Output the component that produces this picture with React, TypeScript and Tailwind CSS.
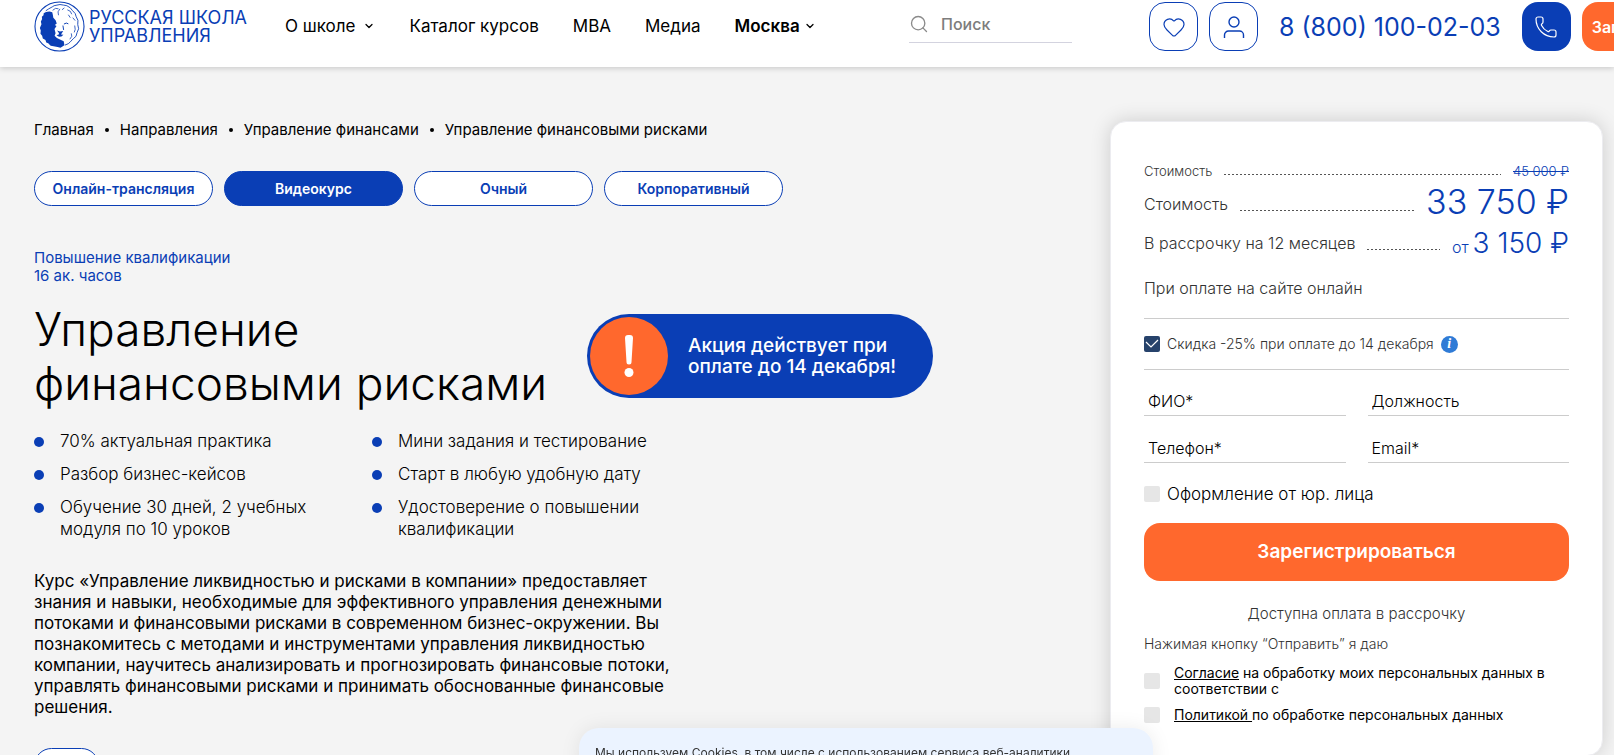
import type { ReactNode } from "react";
import { ChevronDown, Heart, Phone, Search } from "lucide-react";

const crumbs = ["Главная", "Направления", "Управление финансами", "Управление финансовыми рисками"];

const formats = ["Онлайн-трансляция", "Видеокурс", "Очный", "Корпоративный"];

const features = [
  "70% актуальная практика",
  "Мини задания и тестирование",
  "Разбор бизнес-кейсов",
  "Старт в любую удобную дату",
  "Обучение 30 дней, 2 учебных модуля по 10 уроков",
  "Удостоверение о повышении квалификации",
];

const fields = [
  { id: "fio", type: "text", label: "ФИО*" },
  { id: "position", type: "text", label: "Должность" },
  { id: "phone", type: "tel", label: "Телефон*" },
  { id: "email", type: "email", label: "Email*" },
];

function LionLogo() {
  return (
    <svg viewBox="0 0 52 52" className="size-[51px] shrink-0" fill="none" stroke="#0a3eb5">
      <circle cx="26" cy="26" r="25" strokeWidth="1.1" />
      {/* dark side of the mane */}
      <path
        fill="#0a3eb5"
        stroke="none"
        d="M11.700 11.400L13.700 11L15.900 10.700L18.600 11.400L19.200 14L19.700 17L22 19.700L23.200 23L21.200 24.500L23 25.600L20.900 28.600L22 32.800L21 35.500L23.400 37.600L27 39.500L30.300 41L31 45.200L29 46.500L27 47.600L24 47L20 46.200L17 45.500L14.500 43L12.500 42.200L11.700 39.700L9 38.200L8.300 35.500L6.600 33.500L6.900 30L6 27.500L7.600 23.800L7 21L8.300 18.300L8 16L9.700 14.500L9.900 12.500z"
      />
      {/* light side outline */}
      <path
        strokeWidth="0.9"
        d="M12 10L15 8L18.600 6L20.500 4.800L23.400 4.200L26.500 3.600L30.300 4.200L33.500 4.800L37 7L39 9.500L42 12.800L43 16L44.800 19.700L44.600 24L45.500 28.300L44 32L42.800 36L40 38.500L37 41.700L35 43.500L31.500 45"
      />
      <path
        strokeWidth="0.8"
        d="M19 9.500L22 7.500L25 8M26.500 8L24.500 11L25 14.500M31 7L28.500 9M34 9L37 10.500L38.500 13.500M39.500 17L42 20M41.500 25L42 29L41 32M38 33L38.500 36L36.500 39M35 14L37 17"
      />
      <path strokeWidth="1" d="M30.500 23.500L33 22.500L35 23.300M29.500 25L30.200 29.500" />
      <path fill="#0a3eb5" stroke="none" d="M23.500 30L26.500 31.200L29.800 30.500L28.500 32.500L27.500 34.200L30 34.500L28 36.200L25.500 36.400L23 35L25.600 34L25.200 32.400z" />
    </svg>
  );
}

function Checkbox({ id, checked, children }: { id: string; checked?: boolean; children: ReactNode }) {
  return (
    <>
      <span className="relative flex size-4 shrink-0">
        <input
          id={id}
          type="checkbox"
          defaultChecked={checked}
          className="peer size-4 appearance-none rounded-xs bg-[#e6e6e6] checked:bg-[#26426b]"
        />
        <svg
          viewBox="0 0 16 16"
          className="pointer-events-none absolute inset-0 hidden peer-checked:block"
          fill="none"
          stroke="#fff"
          strokeWidth="1.2"
        >
          <path d="M2 6l5 5 7-7" />
        </svg>
      </span>
      <label htmlFor={id}>{children}</label>
    </>
  );
}

function Leader({ className }: { className: string }) {
  return (
    <span
      className={`h-px flex-1 bg-[repeating-linear-gradient(90deg,#555_0_2px,transparent_2px_4px)] ${className}`}
    />
  );
}

function Header() {
  return (
    <header className="relative z-10 flex items-start overflow-hidden bg-white pt-px pb-[15px] pl-[34px] whitespace-nowrap shadow-[0_1px_6px_rgba(0,0,0,0.2)]">
      <a href="#" className="flex w-[251px] shrink-0 items-center gap-1 text-lg/[18px] text-[#0a3eb5]">
        <LionLogo />
        <span>
          РУССКАЯ ШКОЛА
          <br />
          УПРАВЛЕНИЯ
        </span>
      </a>
      <nav className="flex h-[50px] w-[624px] shrink-0 items-center gap-[34px] text-[17px]/6">
        <a href="#" className="flex items-center gap-2">
          О школе <ChevronDown className="size-3" strokeWidth={2.5} />
        </a>
        <a href="#">Каталог курсов</a>
        <a href="#">MBA</a>
        <a href="#">Медиа</a>
        <button type="button" className="flex items-center gap-1 font-semibold">
          Москва <ChevronDown className="size-3" strokeWidth={2.5} />
        </button>
      </nav>
      <div className="mt-1 flex h-[38px] w-[163px] shrink-0 items-center gap-3 border-b border-[#d3d3df]">
        <Search className="size-5 shrink-0 text-[#8a8a8a]" strokeWidth={1.6} />
        <input
          type="search"
          aria-label="Поиск"
          placeholder="Поиск"
          className="min-w-0 flex-1 text-base font-medium outline-none placeholder:text-[#7d7d7d]"
        />
      </div>
      <div className="ml-[77px] flex shrink-0 items-center pt-px text-[#0a3eb5]">
        <a href="#" className="mr-[11px] flex size-[49px] items-center justify-center rounded-2xl border border-[#0a3eb5]">
          <Heart className="size-6" strokeWidth={1.2} />
        </a>
        <a href="#" className="flex size-[49px] items-center justify-center rounded-2xl border border-[#0a3eb5]">
          <svg viewBox="0 0 24 24" className="size-6" fill="none" stroke="currentColor" strokeWidth="1.4">
            <circle cx="12" cy="7" r="5" />
            <path d="M2.500 23v-3a4 4 0 0 1 4-4h11a4 4 0 0 1 4 4v3" />
          </svg>
        </a>
        <a href="tel:88001000203" className="mx-[21px] text-[25px]/8">
          8 (800) 100-02-03
        </a>
        <a href="#" className="mr-[11px] flex size-[49px] items-center justify-center rounded-2xl bg-[#0a3eb5] text-white">
          <Phone className="size-6" strokeWidth={1.2} />
        </a>
        <button type="button" className="h-[49px] rounded-2xl bg-[#ff682d] px-[10px] text-base font-semibold text-white">
          Записаться
        </button>
      </div>
    </header>
  );
}

function Course() {
  return (
    <section className="min-w-0 flex-1 pt-[53px] pl-[34px]">
      <nav className="flex items-center gap-[11px] text-[15px]/5">
        {crumbs.map((crumb, i) => (
          <span key={crumb} className="flex items-center gap-[11px]">
            {i > 0 && <span className="size-1 rounded-full bg-black" />}
            <a href="#">{crumb}</a>
          </span>
        ))}
      </nav>

      <div className="mt-[31px] flex gap-[11px]">
        {formats.map((format) => (
          <button
            key={format}
            type="button"
            className={`h-[35px] w-[179px] rounded-full border border-[#0a3eb5] text-sm font-semibold ${
              format === "Видеокурс" ? "bg-[#0a3eb5] text-white" : "bg-white text-[#0a3eb5]"
            }`}
          >
            {format}
          </button>
        ))}
      </div>

      <p className="mt-[43px] text-[15px]/[18px] text-[#0a3eb5]">
        Повышение квалификации
        <br />
        16 ак. часов
      </p>

      <div className="mt-[17px] flex items-center">
        <h1 className="w-[553px] text-[46px]/[54px] font-light">Управление финансовыми рисками</h1>
        <div className="flex h-[84px] w-[346px] items-center gap-5 rounded-full bg-[#0a3eb5] pl-[3px] text-white">
          <span className="flex size-[78px] items-center justify-center rounded-full bg-[#ff682d]">
            <svg viewBox="0 0 10 42" className="h-[42px] w-[10px]" fill="#fff">
              <path d="M1 3a3 3 0 0 1 3-3h2a3 3 0 0 1 3 3l-1.500 24a2 2 0 0 1-5 0z" />
              <circle cx="5" cy="37.500" r="4.500" />
            </svg>
          </span>
          <p className="text-[19px]/[21px] font-medium">
            Акция действует при
            <br />
            оплате до 14 декабря!
          </p>
        </div>
      </div>

      <ul className="mt-5 grid w-[676px] grid-cols-2 gap-y-[11px] text-[17px]/[22px] font-light">
        {features.map((feature) => (
          <li key={feature} className="flex gap-4">
            <span className="mt-[7px] size-[10px] shrink-0 rounded-full bg-[#0a3eb5]" />
            <span className="max-w-[265px]">{feature}</span>
          </li>
        ))}
      </ul>

      <p className="mt-[31px] max-w-[660px] text-[17px]/[21px]">
        Курс «Управление ликвидностью и рисками в компании» предоставляет знания и навыки, необходимые для эффективного
        управления денежными потоками и финансовыми рисками в современном бизнес-окружении. Вы познакомитесь с методами
        и инструментами управления ликвидностью компании, научитесь анализировать и прогнозировать финансовые потоки,
        управлять финансовыми рисками и принимать обоснованные финансовые решения.
      </p>

      <div className="mt-[30px] h-[35px] w-[65px] rounded-full border border-[#0a3eb5] bg-white" />
    </section>
  );
}

function OrderForm() {
  return (
    <form className="mt-[54px] mr-[11px] w-[493px] shrink-0 self-start rounded-2xl border border-[#ececf0] bg-white px-[33px] pt-10 pb-8 text-[#333] shadow-[0_0_20px_rgba(0,0,0,0.16)]">
      <div className="flex items-end gap-3 text-[13px]/[18px] font-light">
        <span>Стоимость</span>
        <Leader className="mb-[5px]" />
        <s className="text-[#0a3eb5]">45 000 ₽</s>
      </div>
      <div className="mt-1 flex items-end gap-3 text-base/8 font-light">
        <span>Стоимость</span>
        <Leader className="mb-[9px]" />
        <span className="text-[34px]/9 text-[#0a3eb5]">33 750 ₽</span>
      </div>
      <div className="mt-[7px] flex items-end gap-3 text-base/8 font-light">
        <span>В рассрочку на 12 месяцев</span>
        <Leader className="mb-[9px]" />
        <span className="flex items-baseline gap-1 leading-5 text-[#0a3eb5]">
          от <span className="text-[28px]/8">3 150 ₽</span>
        </span>
      </div>
      <p className="mt-[17px] text-base/6 font-light">При оплате на сайте онлайн</p>

      <div className="mt-[18px] flex h-[52px] items-center gap-[7px] border-y border-[#ccc] text-sm font-light">
        <Checkbox id="discount" checked>
          Скидка -25% при оплате до 14 декабря
        </Checkbox>
        <span className="flex size-[17px] items-center justify-center rounded-full bg-[#2f7bd6] font-['Liberation_Serif',serif] text-sm/4 font-bold text-white italic">
          i
        </span>
      </div>

      <div className="mt-4 grid grid-cols-2 gap-x-[22px] gap-y-[17px]">
        {fields.map((field) => (
          <input
            key={field.id}
            id={field.id}
            type={field.type}
            aria-label={field.label}
            placeholder={field.label}
            className="h-[30px] w-full border-b border-[#ccc] px-1 text-base font-light outline-none placeholder:text-black"
          />
        ))}
      </div>

      <div className="mt-[19px] flex items-center gap-[7px] text-[17px]/6 font-light text-black">
        <Checkbox id="legal">Оформление от юр. лица</Checkbox>
      </div>

      <button type="submit" className="mt-[17px] h-[58px] w-full rounded-2xl bg-[#ff682d] text-[19px] font-semibold text-white">
        Зарегистрироваться
      </button>

      <p className="mt-[23px] text-center text-[15px]/5 font-light">Доступна оплата в рассрочку</p>
      <p className="mt-[10px] text-sm/5 font-light">Нажимая кнопку “Отправить” я даю</p>

      <div className="mt-[11px] flex items-center gap-[14px] text-sm/4 text-black">
        <Checkbox id="consent">
          <a href="#" className="underline">Согласие</a> на обработку моих персональных данных в соответствии с
        </Checkbox>
      </div>
      <div className="mt-[10px] flex items-center gap-[14px] text-sm/4 text-black">
        <Checkbox id="policy">
          <a href="#" className="underline">Политикой </a>по обработке персональных данных
        </Checkbox>
      </div>
    </form>
  );
}

export default function App() {
  return (
    <div className="h-screen overflow-hidden bg-[#f4f4f4] font-[Inter,sans-serif] text-black">
      <Header />
      <main className="flex">
        <Course />
        <OrderForm />
      </main>
      {/* cookie notice, sticks out of the bottom edge */}
      <div className="fixed -bottom-14 left-1/2 z-20 h-[83px] w-[574px] -translate-x-[228px] rounded-[20px] bg-[#ebf3ff] px-4 pt-[17px] text-xs/4 text-[#333] shadow-[0_0_20px_rgba(0,0,0,0.08)]">
        Мы используем Cookies, в том числе с использованием сервиса веб-аналитики
      </div>
    </div>
  );
}
